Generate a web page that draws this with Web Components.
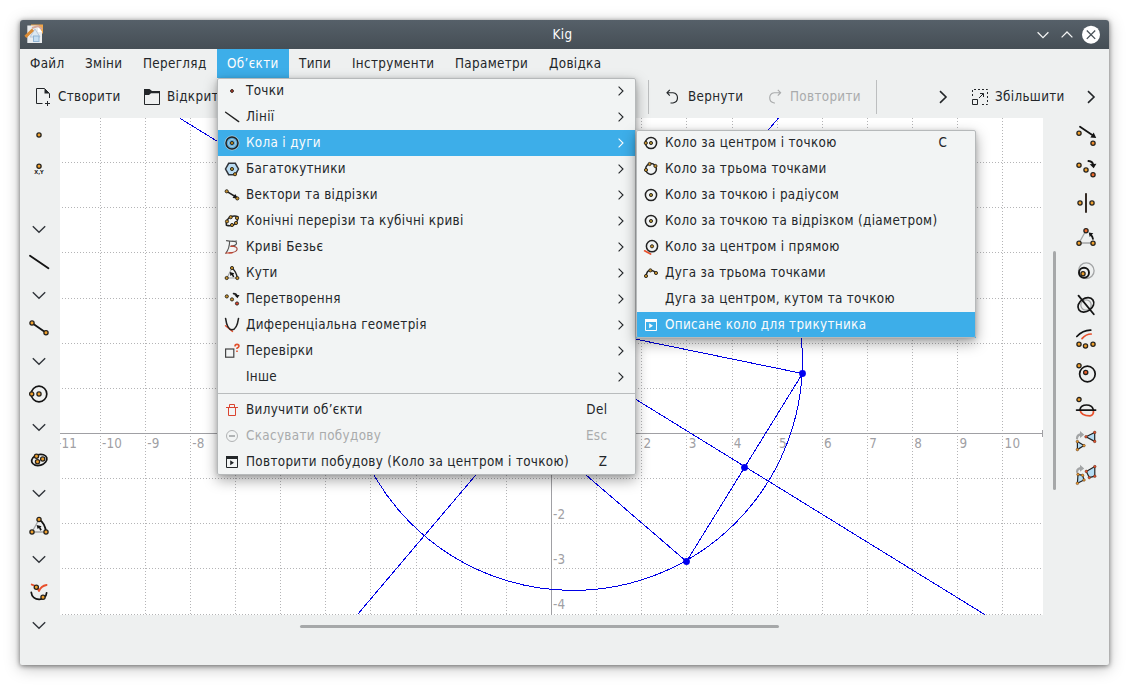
<!DOCTYPE html>
<html lang="uk">
<head>
<meta charset="utf-8">
<title>Kig</title>
<style>
html,body{margin:0;height:100%;overflow:hidden;background:#fff}
body{font-family:"DejaVu Sans Condensed","DejaVu Sans",sans-serif;font-stretch:condensed;font-size:13.33px;letter-spacing:.335px;color:#232629}
</style>
</head>
<body>
<kig-window></kig-window>
<script>
const O = '#f0a02c', R = '#e8502c', K = '#141414', G = '#a2a4a5', B = '#b5dcf3';
const dot = (x, y, f = O, r = 2.1, s = 1.3) => `<circle cx="${x}" cy="${y}" r="${r}" fill="${f}" stroke="#26221c" stroke-width="${s}"/>`;
const sd = (x, y, f = '#c8922c') => dot(x, y, f, 1.6, .9);
const ln = (d, c = K, w = 1.7) => `<path d="${d}" fill="none" stroke="${c}" stroke-width="${w}" stroke-linecap="round" stroke-linejoin="round"/>`;
const fl = (d, c = K) => `<path d="${d}" fill="${c}"/>`;
const ring = (x, y, r, c = K, w = 1.7, f = 'none') => `<circle cx="${x}" cy="${y}" r="${r}" fill="${f}" stroke="${c}" stroke-width="${w}"/>`;
const v = (x, y, c = R) => `<circle cx="${x}" cy="${y}" r="1.3" fill="${c}" stroke="#532" stroke-width=".5"/>`;
const bigIcons = {
  point: dot(11, 11),
  pointxy: dot(11, 8.2) + `<text x="11" y="16.2" text-anchor="middle" font-size="5.6" letter-spacing="0" font-weight="bold" font-family="DejaVu Sans" fill="#222">X,Y</text>`,
  line: ln('M2 4.8L20.4 17.2', K, 1.9),
  segment: ln('M4 6L18 15.7', K, 1.8) + dot(4, 6) + dot(18, 15.7),
  circle: ring(11, 11, 7.8) + dot(11, 11) + dot(3.7, 11),
  conic: `<ellipse cx="11.3" cy="11" rx="7.8" ry="5.4" transform="rotate(-16 11 11)" fill="none" stroke="#141414" stroke-width="1.7"/>` + dot(8.5, 7.2) + dot(14.7, 10) + dot(9.5, 12.8),
  angle: ln('M11 4.5L4 17H18', G, 1.3) + ln('M11 4.5Q17 8 18 17', K, 1.8) + fl('M8.6 10l5 1.2-1.2 1 1.4 2.6-1.6.9-1.2-2.8-1.4 1.2z') + dot(11, 4.5) + dot(4, 17) + dot(18, 17),
  curves: ln('M3.8 3.6Q9 5 11 10Q13 5 18.5 4', R, 2) + ln('M3.3 11.5C4 20 18 21 18.6 11.8', K, 1.8) + dot(8.3, 6.3) + dot(15, 16.3),
  translate: ln('M5 2.7L18 11.5', K, 1.8) + fl('M21.2 14l-5.8-.6 3.3-4.8z') + dot(4, 9.3) + dot(18, 19.3, '#ee8a2c'),
  rotate: ln('M13.5 3Q18 3.5 18 7', K, 2) + fl('M18.7 10.3l-4-4 6.7-.6z') + dot(4, 7.2) + dot(11, 12) + dot(18, 16.7, '#f06a2c'),
  mirror: ln('M11 1.8V20', '#20160e', 1.8) + dot(5, 11) + dot(17, 11),
  scale: ln('M11 4.5L4 17H18', G, 1.3) + ln('M18 13Q17.5 10 15.5 8.5', K, 1.7) + fl('M13.8 6.4l4.5.8-3.6 3.8z') + dot(11, 4.7, '#f06a2c') + dot(4, 17.3) + dot(18, 17.3),
  inversion: ring(11.3, 10.7, 7.8, G, 1.3) + ring(9, 12.7, 5, K, 1.9) + dot(8, 13.7),
  affinity: ring(11, 11, 5.2, G, 1.3) + `<ellipse cx="11" cy="10.8" rx="8.6" ry="6.4" transform="rotate(-35 11 11)" fill="none" stroke="#141414" stroke-width="1.7"/>` + ln('M3.5 1.6L18.8 20.2', K, 1.8),
  similitude: ln('M1.8 8.5Q8 2 15.8 2.2') + ln('M7 10.6Q11 6 16.2 6', R, 1.7) + dot(4, 16.3) + dot(10.5, 18) + dot(18, 16.3),
  inversion2: ring(12.4, 12, 7.8) + dot(4, 3.7) + dot(10.7, 10.4, '#f0602c'),
  harmonic: `<g transform="translate(0 .8)">` + ln('M5 13Q6 19 15 19Q19 18.6 18.4 13.3', R, 1.7) + ln('M5 12.6Q6 8.2 11.5 8.2Q17 8.2 18.2 12.6') + ln('M1.6 13.3H20.6') + dot(4, 2.8) + '</g>',
  macro1: ln('M2 8.3Q2.3 4.5 6.5 4.4', G, 2.2) + fl('M9.2 4.8L5 1v7z', G) + `<path d="M11 6.8L19.7 2.4V11.4ZM2.4 11.6L9 15.6L2.4 19.6Z" fill="${B}" stroke="#222" stroke-width="1.2"/>` + v(11, 6.8) + v(19.7, 2.4) + v(19.7, 11.4) + v(2.4, 11.6, O) + v(9, 15.6, O) + v(2.4, 19.6, O),
  macro2: ln('M2 7.8Q2.3 4.2 6.5 4.2', G, 2.2) + fl('M9.2 4.6L5 .8v7z', G) + `<path d="M11.3 7.4L19.8 2.6V12.2L14.3 13.6ZM3 10.4L7.6 11.3L9 16L2.4 19.3Z" fill="${B}" stroke="#222" stroke-width="1.2"/>` + v(11.3, 7.4) + v(19.8, 2.6) + v(19.8, 12.2) + v(14.3, 13.6) + v(3, 10.4, O) + v(7.6, 11.3, O) + v(9, 16, O) + v(2.4, 19.3, O),
  down: `<path d="M4.8 8.2L11 14.2L17.2 8.2" fill="none" stroke="#30343a" stroke-width="1.4"/>`
};
const c = 'currentColor';
const smallIcons = {
  none: '',
  point: dot(8, 8, '#e0402c', 1.4, 1),
  line: ln('M1.6 3.2L14.7 12.6', '#222', 1.4),
  circles: ring(8, 8, 7, '#b9cdd6', 1) + ring(8, 8, 6, '#222', 1.5, '#5aa9d8') + ring(8, 8, 3.6, '#b7d0dc', .9) + sd(8, 8, '#b98a22'),
  polygon: `<path d="M4.7 2.3h6.6L14.5 8l-3.2 5.7H4.7L1.5 8z" fill="#badcf2" stroke="#30343a" stroke-width="1.5"/>` + sd(8, 8, '#a88a2c') + sd(11, 13.2),
  vector: ln('M2.7 4.3L12 10', '#222', 1.5) + fl('M14 11.5l-5.4-.6 2.6-4z') + sd(2.7, 4.3) + sd(13.3, 11.4),
  conics: `<path d="M6.5 3.6Q11 2.2 13.8 3.6Q14.4 7 11.8 10.6Q7.5 13.8 2.4 12.2Q1.4 7.4 6.5 3.6z" fill="none" stroke="#222" stroke-width="1.5"/>` + sd(6.7, 4.2) + sd(13, 5) + sd(3, 8.4) + sd(12, 10) + sd(8, 12),
  bezier: ln('M2.5 1.6Q7 2.6 12.6 2M5.6 2.2Q5.6 9 1.8 14.4', '#555', 1.1) + ln('M8 2.2C14.5 2 14 6.6 7 7.2', '#555', 1.1) + ln('M7 7.2C15.5 7 15.5 13.4 5 13.8', '#a5463a', 1.2) + ln('M2 14H8M7 7.2H9.5', '#d0452c', 1.1),
  angles: ln('M8 3L3 13H13', G, 1.1) + ln('M8 3Q12.5 7 13.3 13', '#222', 1.4) + fl('M5.8 7l4.5 1.2-1 1 1 2.6-1.4.4-1-2.2-1.5 1z') + sd(8, 3) + sd(2.7, 13) + sd(13.3, 13),
  transform: ln('M9.5 2.6Q12.4 2.8 13 5', '#222', 1.6) + fl('M13.5 7.3l-3-3 5-.4z') + sd(2.8, 5.4) + sd(8, 8.4) + sd(13, 12.5, '#e0402c'),
  diff: ln('M1.5 8.8L8.5 14.4', R, 1.4) + ln('M1.6 1.5Q3.2 12.8 8 12.8Q12.8 12.8 14.5 1.5', '#222', 1.6),
  tests: `<rect x="1.6" y="6" width="8.2" height="8.2" fill="none" stroke="#444" stroke-width="1.2"/><path d="M11 3.4Q11 1.4 13 1.4Q15 1.4 15 3.2Q14.8 4.4 13 5.2V6M13 7.6V9" fill="none" stroke="#e2502c" stroke-width="1.6"/>`,
  trash: `<path d="M2 5.5H14M5.5 5.5V2.5H10.5V5.5M4.5 5.5V13.5H11.5V5.5" fill="none" stroke="#da4430"/>`,
  cancel: `<circle cx="8" cy="8" r="5.5" fill="none" stroke="#b1b3b4"/><path d="M5 8h6" stroke="#a6a8a9" stroke-width="1.7"/>`,
  repeat: `<path d="M2.5 3.5V13.5H13.5V3.5" fill="none" stroke="${c}"/><path d="M2 2h12v3H2zM6.2 6.2L10 8.7L6.2 11.3z" fill="${c}"/>`,
  cBP: ring(8, 8, 5.6, '#222', 1.5) + sd(8, 8, '#a98a2c') + sd(2.8, 8),
  c3P: ring(8, 8, 5.4, '#222', 1.5) + sd(6.6, 3) + sd(12.4, 5) + sd(3, 9),
  cPR: ring(8, 8, 5.6, '#222', 1.5) + sd(8, 8, '#a98a2c'),
  cTan: ln('M1.6 11.8L7.6 15', R, 1.7) + ring(9, 7.2, 5.6, '#222', 1.5) + sd(9, 7.3),
  arc3: ln('M3 11Q4 5 7.6 5.2Q11 5.4 13 8', '#222', 1.5) + sd(3, 11) + sd(7.4, 5.4) + sd(13, 8),
  next: `<path d="M5.6 3.6L10 8L5.6 12.4" fill="none" stroke="${c}" stroke-width="1.1"/>`,
  more: `<path d="M5 3.2L11 9L5 14.8" fill="none" stroke="${c}" stroke-width="1.6"/>`,
  new: `<path d="M7.5 15.5H1.5V.5H9.5L14.5 5.5V10M10 15.5H15M12.5 13V18" fill="none" stroke="${c}"/><path d="M9.5 .5V5.5H14.5z" fill="${c}"/>`,
  open: `<path d="M.5 5V16.5H15.5V3.5H7" fill="none" stroke="${c}"/><path d="M0 1H5.5L8 3H16V5.2H7L5 7H0z" fill="${c}"/>`,
  undo: `<path d="M4.8 1.8L2 4.7L4.8 7.6M2.3 4.7H8A5.2 5.2 0 0 1 8 15H5.5" fill="none" stroke="${c}" stroke-width="1.15"/>`,
  redo: `<path d="M10.8 1.8L13.6 4.7L10.8 7.6M13.3 4.7H7.2A5.2 5.2 0 0 0 7.2 15H8" fill="none" stroke="${c}" stroke-width="1.15"/>`,
  zoom: `<path d="M.5 8V1.5H15.5V16.5H9" fill="none" stroke="${c}" stroke-dasharray="2 2"/><path d="M.5 11.5H5.5V16.5H.5zM7 10L11.5 5.5M8 5.5H11.5V9" fill="none" stroke="${c}"/>`,
  wdown: `<path d="M2.6 5.2L8 10.6L13.4 5.2" fill="none" stroke="#f4f5f5" stroke-width="1.25"/>`,
  wup: `<path d="M2.6 10.4L8 5L13.4 10.4" fill="none" stroke="#f4f5f5" stroke-width="1.25"/>`,
  wclose: `<circle cx="8" cy="7.7" r="9" fill="#fff"/><path d="M3.8 3.5L12.2 11.9M12.2 3.5L3.8 11.9" stroke="#475057" stroke-width="1.3"/>`,
  app: `<rect x="4" y="-2.5" width="12" height="9" fill="#efa64c"/><path d="M.3-1.5H11L15 5V16H.3z" fill="#e9ecee"/><path d="M11-1.5L15 5L11 5z" fill="#fff"/><path d="M3 10L8 2L13 10z" fill="#dbe8f2" stroke="#b9c6d8"/><rect x="6.5" y="9" width="5.5" height="5.5" fill="#c4dcf0" stroke="#8fb4d4"/><path d="M-1.6 9.8L6 2.6" stroke="#d98b35" stroke-width="3"/><path d="M5 1L11-1L15 2" fill="none" stroke="#d6a89a" stroke-width="2"/>`
};
const define = (tag, cls) => customElements.define(tag, cls);
class Base extends HTMLElement {
  connectedCallback() {
    if (!this.shadowRoot) this.attachShadow({ mode: 'open' }).innerHTML = this.render();
  }
}
define('kig-icon', class extends Base {
  render() {
    const big = this.hasAttribute('big'), n = this.getAttribute('name'), s = big ? 22 : 16;
    return `<style>:host{display:block;flex:none;width:${s}px;height:${s}px}svg{display:block;overflow:visible}</style>
    <svg width="${s}" height="${s}" viewBox="0 0 ${s} ${s}">${(big ? bigIcons : smallIcons)[n]}</svg>`;
  }
});
define('kig-titlebar', class extends Base {
  render() {
    return `<style>:host{display:grid;grid-template-columns:1fr auto 1fr;align-items:center;height:29px;flex:none;box-sizing:border-box;padding:0 10px 0 7px;color:#fcfcfc;background:linear-gradient(#566069,#454e55);border-radius:3px 3px 0 0}
    span{margin-right:1px}.b{display:flex;justify-content:flex-end;gap:8px}</style>
    <kig-icon name="app"></kig-icon><span><slot></slot></span><div class="b"><kig-icon name="wdown"></kig-icon><kig-icon name="wup"></kig-icon><kig-icon name="wclose"></kig-icon></div>`;
  }
});
define('kig-menubar', class extends Base {
  render() {
    const m = [['Файл', 55], ['Зміни', 58], ['Перегляд', 84], ['Об’єкти', 72], ['Типи', 53], ['Інструменти', 103], ['Параметри', 94], ['Довідка', 74]];
    return `<style>:host{display:flex;height:29px;flex:none}span{box-sizing:border-box;padding-left:10px;line-height:29px;white-space:nowrap}.on{background:#3daee9;color:#fcfcfc}</style>` +
      m.map(([t, w], i) => `<span style="width:${w}px" class="${i == 3 ? 'on' : ''}">${t}</span>`).join('');
  }
});
define('kig-action', class extends Base {
  render() {
    return `<style>:host{display:flex;align-items:center;gap:7px;white-space:nowrap;flex:none}:host([disabled]){color:#a9abac}kig-icon{margin-bottom:2px}</style><kig-icon name="${this.getAttribute('icon')}"></kig-icon><span><slot></slot></span>`;
  }
});
define('kig-toolbar', class extends Base {
  render() {
    return `<style>:host{display:flex;align-items:center;height:40px;flex:none;padding:0 10px 0 15px;box-sizing:border-box}
    kig-action{padding-bottom:3px}.sep{flex:none;width:1px;height:34px;background:#bcbebf;margin-bottom:2px}</style>
    <kig-action icon="new" style="width:109px">Створити</kig-action><kig-action icon="open" style="width:504px">Відкрити</kig-action>
    <i class="sep"></i><kig-action icon="undo" style="width:102px;margin-left:16px">Вернути</kig-action><kig-action icon="redo" disabled style="width:109px">Повторити</kig-action><i class="sep" style="margin-right:58px"></i>
    <kig-action icon="more" style="width:37px"></kig-action><kig-action icon="zoom" style="width:111px">Збільшити</kig-action><kig-action icon="more"></kig-action>`;
  }
});
define('kig-palette', class extends Base {
  render() {
    const left = this.getAttribute('side') == 'left';
    const row = (n, h) => `<div style="height:${h}px"><kig-icon big name="${n}"></kig-icon></div>`;
    const rows = left
      ? row('point', 34) + row('pointxy', 34) + '<div style="height:26px"></div>' + ['down', 'line', 'down', 'segment', 'down', 'circle', 'down', 'conic', 'down', 'angle', 'down', 'curves', 'down'].map(n => row(n, 33)).join('')
      : ['translate', 'rotate', 'mirror', 'scale', 'inversion', 'affinity', 'similitude', 'inversion2', 'harmonic', 'macro1', 'macro2'].map(n => row(n, 34)).join('');
    return `<style>:host{display:block}div{display:flex;align-items:center;justify-content:center}</style>${rows}`;
  }
});
define('kig-canvas', class extends Base {
  render() {
    const ox = 491, oy = 315, u = 45.13;
    let grid = '', text = '';
    for (let i = -10; i <= 10; i++) if (i) { const x = ox + Math.round(i * u + (i > 0 ? .1 : 0)) + .5; grid += `<path d="M${x} 0V497"/>`; }
    for (let i = -4; i <= 6; i++) if (i) { const y = oy - Math.round(i * u) + .5; grid += `<path d="M2 ${y}H983"/>`; }
    for (const i of [-11, -10, -9, -8, 2, 3, 4, 5, 6, 7, 8, 9, 10]) text += `<text x="${ox + i * u + 2.3}" y="330">${i}</text>`;
    for (const i of [-4, -3, -2]) text += `<text x="${ox + 2}" y="${oy - i * u - 4.5}">${i}</text>`;
    return `<style>:host{display:block;background:#fff}svg{display:block}text{fill:#a0a0a4;letter-spacing:.2px}</style>
    <svg width="983" height="497" viewBox="0 0 983 497">
      <g stroke="#b4b4b6" stroke-dasharray="1 2" shape-rendering="crispEdges">${grid}</g>
      <path d="M0 315.5H983M491.5 0V497M982.5 312V319" stroke="#a0a0a4" shape-rendering="crispEdges"/>${text}
      <g fill="none" stroke="#0000e6" shape-rendering="crispEdges"><circle cx="513" cy="243" r="229.4"/>
      <path d="M120 .3L925 496.7M297.5 496.5L718.5 0M303 165L742.5 255.5L626.5 443.5Z"/></g>
      <g fill="#0000f0"><circle cx="742.5" cy="255.5" r="3.4"/><circle cx="684.5" cy="349.5" r="3.4"/><circle cx="626.5" cy="443.5" r="3.4"/></g>
    </svg>`;
  }
});
define('kig-scrollbar', class extends Base {
  render() {
    return `<style>:host{display:block;background:#a6a8a9;border-radius:2px}</style>`;
  }
});
define('kig-menu-item', class extends Base {
  render() {
    const a = n => this.getAttribute(n);
    return `<style>:host{display:flex;align-items:center;height:26px;box-sizing:border-box;padding:0 7px;white-space:nowrap}
    :host([on]){background:#3daee9;color:#fcfcfc}:host([disabled]){color:#a9abac}
    .t{margin-left:6px;flex:1;padding-bottom:2px}.k{padding:0 21.7px 2px 0}</style>
    <kig-icon name="${a('icon') || 'none'}"></kig-icon><span class="t"><slot></slot></span>${a('key') ? `<span class="k">${a('key')}</span>` : ''}${this.hasAttribute('sub') ? '<kig-icon name="next"></kig-icon>' : ''}`;
  }
});
define('kig-menu', class extends Base {
  render() {
    return `<style>:host{display:block;position:absolute;background:#f2f4f4;border-radius:2px;box-shadow:0 5px 14px rgba(0,0,0,.36),0 1px 4px rgba(0,0,0,.16)}
    :host::after{content:"";position:absolute;inset:0;border:1px solid #b6b9ba;border-radius:2px;pointer-events:none}</style><slot></slot>`;
  }
});
define('kig-window', class extends Base {
  render() {
    const sub = (i, t, x = '') => `<kig-menu-item sub icon="${i}" ${x}>${t}</kig-menu-item>`;
    const it = (i, t, x = '') => `<kig-menu-item icon="${i}" ${x}>${t}</kig-menu-item>`;
    return `<style>:host{display:block;padding:20px;width:1129px;height:685px;box-sizing:border-box;position:relative}
    .w{display:flex;flex-direction:column;height:645px;background:#eef0f0;border-radius:3px 3px 2px 2px;box-shadow:0 1px 5px rgba(0,0,0,.5),0 3px 16px rgba(0,0,0,.26)}
    .m{display:grid;grid-template-columns:40px 983px 22px 44px;grid-template-rows:497px 1fr;flex:1}
    .l{margin-right:2px}.r{margin-left:-2px;margin-right:1px}
    .vs{width:3px;height:239px;margin:133px 0 0 10px}.hs{grid-column:2;width:479px;height:3px;margin:10px 0 0 240px}
    .l,.r,.vs{align-self:start}
    hr{border:0;height:1px;background:#b9bcbd;margin:3px 0}</style>
    <div class="w"><kig-titlebar>Kig</kig-titlebar><kig-menubar></kig-menubar><kig-toolbar></kig-toolbar>
      <div class="m"><kig-palette class="l" side="left"></kig-palette><kig-canvas></kig-canvas><kig-scrollbar class="vs"></kig-scrollbar><kig-palette class="r" side="right"></kig-palette><kig-scrollbar class="hs"></kig-scrollbar></div></div>
    <kig-menu style="left:217px;top:78px;width:419px;height:397px">
      ${sub('point', 'Точки') + sub('line', 'Лінії') + sub('circles', 'Кола і дуги', 'on') + sub('polygon', 'Багатокутники') + sub('vector', 'Вектори та відрізки') + sub('conics', 'Конічні перерізи та кубічні криві') + sub('bezier', 'Криві Безьє') + sub('angles', 'Кути') + sub('transform', 'Перетворення') + sub('diff', 'Диференціальна геометрія') + sub('tests', 'Перевірки') + sub('none', 'Інше')}<hr>
      ${it('trash', 'Вилучити об’єкти', 'key="Del"') + it('cancel', 'Скасувати побудову', 'disabled key="Esc"') + it('repeat', 'Повторити побудову (Коло за центром і точкою)', 'key="Z"')}
    </kig-menu>
    <kig-menu style="left:636px;top:130px;width:340px;height:208px">
      ${it('cBP', 'Коло за центром і точкою', 'key="C"') + it('c3P', 'Коло за трьома точками') + it('cPR', 'Коло за точкою і радіусом') + it('cPR', 'Коло за точкою та відрізком (діаметром)') + it('cTan', 'Коло за центром і прямою') + it('arc3', 'Дуга за трьома точками') + it('none', 'Дуга за центром, кутом та точкою') + it('repeat', 'Описане коло для трикутника', 'on')}
    </kig-menu>`;
  }
});
</script>
</body>
</html>
